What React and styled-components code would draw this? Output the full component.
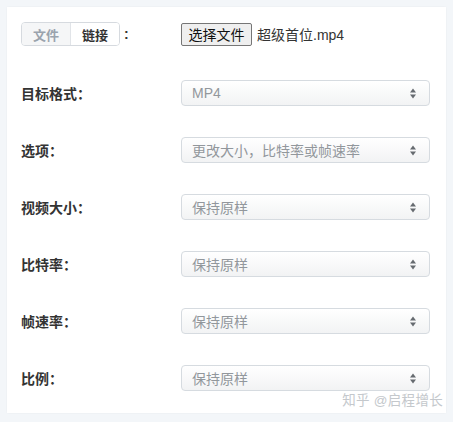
import React, { useState } from "react";
import styled, { createGlobalStyle } from "styled-components";

const GlobalStyle = createGlobalStyle`
  html, body {
    margin: 0;
    padding: 0;
    background: #f3f6f9;
  }
  body {
    font-family: "Liberation Sans", "Noto Sans CJK SC", sans-serif;
  }
`;

const Page = styled.div`
  width: 453px;
  height: 422px;
  padding: 7px 0 0 7px;
  box-sizing: border-box;
`;

const Card = styled.div`
  position: relative;
  width: 439px;
  height: 406px;
  box-sizing: border-box;
  background: #ffffff;
  box-shadow: 0 0 2px rgba(0, 0, 0, 0.05);
  padding: 15px 16px 0 14px;
  display: flex;
  flex-direction: column;
  gap: 31px;
`;

const Row = styled.div`
  display: grid;
  grid-template-columns: 160px 1fr;
  align-items: center;
  height: ${(props) => (props.first ? "24px" : "26px")};
  margin-bottom: ${(props) => (props.first ? "3px" : "0")};
`;

const Label = styled.div`
  font-size: 14px;
  font-weight: bold;
  color: #333333;
  display: flex;
  align-items: center;
`;

const Toggle = styled.div`
  display: flex;
  border: 1px solid #d6dadf;
  border-radius: 4px;
  overflow: hidden;
  height: 22px;
`;

const ToggleBtn = styled.div`
  width: 48px;
  display: flex;
  align-items: center;
  justify-content: center;
  font-size: 13px;
  font-weight: bold;
  color: ${(props) => (props.active ? "#9aa3ad" : "#333333")};
  background: ${(props) => (props.active ? "#f5f6f7" : "#ffffff")};
  border-left: ${(props) => (props.active ? "none" : "1px solid #e1e4e8")};
`;

const Colon = styled.span`
  margin-left: 4px;
  font-weight: bold;
  font-size: 14px;
`;

const FileLine = styled.div`
  display: flex;
  align-items: center;
  gap: 5px;
`;

const FileBtn = styled.div`
  height: 23px;
  width: 71px;
  box-sizing: border-box;
  border: 1px solid #767676;
  border-radius: 2px;
  background: #efefef;
  font-size: 14px;
  color: #111111;
  display: flex;
  align-items: center;
  justify-content: center;
`;

const FileName = styled.span`
  font-size: 14px;
  color: #333333;
`;

const Select = styled.div`
  height: 26px;
  width: 249px;
  box-sizing: border-box;
  border: 1px solid #d6dbe0;
  border-radius: 4px;
  background: linear-gradient(#ffffff, #f2f3f4);
  padding: 0 12px 0 10px;
  display: flex;
  align-items: center;
  justify-content: space-between;
  font-size: 14px;
  color: #92979c;
`;

const Watermark = styled.div`
  position: absolute;
  right: 3px;
  bottom: 4px;
  font-size: 13.5px;
  color: #c4c8cc;
  letter-spacing: 0.3px;
`;

const Arrows = () => (
  <svg width="8" height="11" viewBox="0 0 8 11">
    <path d="M4 0.5 L7 4.5 L1 4.5 Z" fill="#666b70" />
    <path d="M4 10.5 L7 6.5 L1 6.5 Z" fill="#666b70" />
  </svg>
);

const fields = [
  { label: "目标格式：", value: "MP4" },
  { label: "选项：", value: "更改大小，比特率或帧速率" },
  { label: "视频大小：", value: "保持原样" },
  { label: "比特率：", value: "保持原样" },
  { label: "帧速率：", value: "保持原样" },
  { label: "比例：", value: "保持原样" },
];

const App = () => {
  const [mode, setMode] = useState("file");

  return (
    <>
      <GlobalStyle />
      <Page>
        <Card>
          <Row first>
            <Label>
              <Toggle>
                <ToggleBtn active={mode === "file"} onClick={() => setMode("file")}>
                  文件
                </ToggleBtn>
                <ToggleBtn active={mode === "link"} onClick={() => setMode("link")}>
                  链接
                </ToggleBtn>
              </Toggle>
              <Colon>:</Colon>
            </Label>
            <FileLine>
              <FileBtn>选择文件</FileBtn>
              <FileName>超级首位.mp4</FileName>
            </FileLine>
          </Row>
          {fields.map((f) => (
            <Row key={f.label}>
              <Label>{f.label}</Label>
              <Select>
                <span>{f.value}</span>
                <Arrows />
              </Select>
            </Row>
          ))}
          <Watermark>知乎 @启程增长</Watermark>
        </Card>
      </Page>
    </>
  );
};

export default App;
